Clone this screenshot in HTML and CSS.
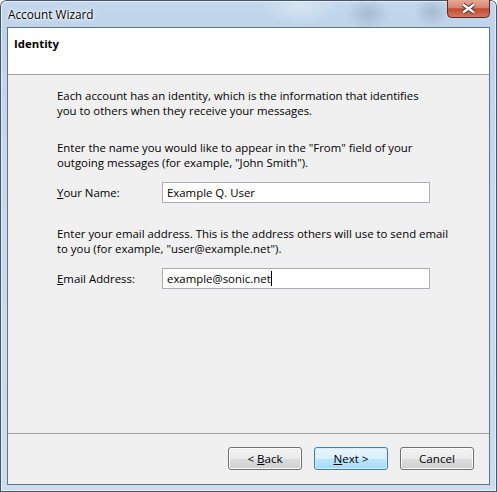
FILE: index.html
```html
<!DOCTYPE html>
<html>
<head>
<meta charset="utf-8">
<title>Account Wizard</title>
<link rel="stylesheet" href="styles.css">
</head>
<body>
<div class="window">
  <div class="titlebar">
    <span class="title">Account Wizard</span>
    <div class="close">
      <svg width="43" height="18" viewBox="0 0 43 18">
        <defs>
          <linearGradient id="cg" x1="0" y1="0" x2="0" y2="1">
            <stop offset="0" stop-color="#e9a896"/>
            <stop offset="0.45" stop-color="#d6836d"/>
            <stop offset="0.5" stop-color="#c14a30"/>
            <stop offset="1" stop-color="#d67a5e"/>
          </linearGradient>
        </defs>
        <path d="M0.5 0 V13.5 Q0.5 17.5 4.5 17.5 H38.5 Q42.5 17.5 42.5 13.5 V0" fill="url(#cg)" stroke="#5b2b22"/>
        <path d="M16 4.5 L27 12.5 M27 4.5 L16 12.5" stroke="#4a302b" stroke-width="4.2"/>
        <path d="M16 4.5 L27 12.5 M27 4.5 L16 12.5" stroke="#ffffff" stroke-width="2.4"/>
      </svg>
    </div>
  </div>
  <div class="client">
    <div class="header">
      <span class="header-title">Identity</span>
    </div>
    <div class="content">
      <p class="desc first">Each account has an identity, which is the information that identifies<br>you to others when they receive your messages.</p>
      <p class="desc">Enter the name you would like to appear in the "From" field of your<br>outgoing messages (for example, "John Smith").</p>
      <div class="field">
        <span class="label"><u>Y</u>our Name:</span>
        <div class="input">Example Q. User</div>
      </div>
      <p class="desc">Enter your email address. This is the address others will use to send email<br>to you (for example, "user@example.net").</p>
      <div class="field">
        <span class="label"><u>E</u>mail Address:</span>
        <div class="input">example@sonic.net<span class="caret"></span></div>
      </div>
    </div>
    <div class="footer">
      <button class="btn">&lt; <u>B</u>ack</button>
      <button class="btn btn-default"><u>N</u>ext &gt;</button>
      <button class="btn">Cancel</button>
    </div>
  </div>
</div>
</body>
</html>
```

FILE: styles.css
```css
html, body {
  margin: 0;
  padding: 0;
}

body {
  font-family: "Open Sans", "Noto Sans", sans-serif;
  font-size: 11.4px;
  line-height: 15px;
  color: #000;
  background: #fff;
}

.window {
  width: 497px;
  height: 492px;
  box-sizing: border-box;
  padding: 0 7px 7px 7px;
  display: flex;
  flex-direction: column;
  border-radius: 6px 6px 0 0;
  background:
    radial-gradient(ellipse 22px 16px at 368px 14px, rgba(70, 90, 110, 0.22), rgba(70, 90, 110, 0)),
    radial-gradient(ellipse 18px 16px at 432px 12px, rgba(70, 90, 110, 0.22), rgba(70, 90, 110, 0)),
    radial-gradient(ellipse 40px 20px at 300px 6px, rgba(255, 255, 255, 0.35), rgba(255, 255, 255, 0)),
    linear-gradient(180deg, #c3d7ec 0%, #bed4eb 6%, #c6daef 40%, #c9dcf0 100%);
  box-shadow: inset 0 0 0 1px #45566a, inset 0 0 0 2px rgba(255, 255, 255, 0.55);
}

.titlebar {
  height: 27px;
  flex: 0 0 27px;
  display: flex;
  justify-content: space-between;
  align-items: flex-start;
}

.title {
  padding: 7px 0 0 1px;
  font-size: 11.8px;
  color: #000;
  text-shadow: 0 0 6px #fff, 0 0 3px #fff, 0 0 2px #fff;
}

.close {
  width: 43px;
  height: 18px;
}

.close svg {
  display: block;
}

.client {
  flex: 1;
  display: flex;
  flex-direction: column;
  border: 1px solid #66727f;
  background: #f0f0f0;
}

.header {
  flex: 0 0 auto;
  height: 38px;
  background: #fff;
  border-bottom: 1px solid #a0a0a0;
  padding: 8px 0 0 6px;
}

.header-title {
  font-weight: bold;
}

.content {
  flex: 1;
  padding: 13px 0 0 49px;
}

.desc {
  margin: 22px 0 0 0;
  white-space: nowrap;
}

.desc.first {
  margin-top: 0;
}

.field {
  display: flex;
  align-items: center;
  margin-top: 12px;
  margin-bottom: 23px;
}

.field + .desc {
  margin-top: 0;
}

.label {
  width: 105px;
}

.input {
  width: 268px;
  height: 21px;
  box-sizing: border-box;
  border: 1px solid #abadb3;
  background: #fff;
  padding-left: 4px;
  display: flex;
  align-items: center;
}

.caret {
  display: inline-block;
  width: 1px;
  height: 15px;
  background: #000;
}

.footer {
  flex: 0 0 auto;
  border-top: 1px solid #a0a0a0;
  padding: 13px 15px 14px 0;
  display: flex;
  justify-content: flex-end;
  gap: 12px;
}

.btn {
  width: 74px;
  height: 23px;
  box-sizing: border-box;
  border: 1px solid #707070;
  border-radius: 3px;
  background: linear-gradient(180deg, #f2f2f2 0%, #ebebeb 50%, #dddddd 50%, #cfcfcf 100%);
  box-shadow: inset 0 0 0 1px #fcfcfc;
  font-family: inherit;
  font-size: 11.6px;
  color: #000;
  padding: 0;
  line-height: 15px;
}

.btn-default {
  border-color: #3c7fb1;
  background: linear-gradient(180deg, #eaf6fd 0%, #d9f0fc 50%, #bee6fd 50%, #a7d9f5 100%);
  box-shadow: inset 0 0 0 1px #d8eefb;
}
```
